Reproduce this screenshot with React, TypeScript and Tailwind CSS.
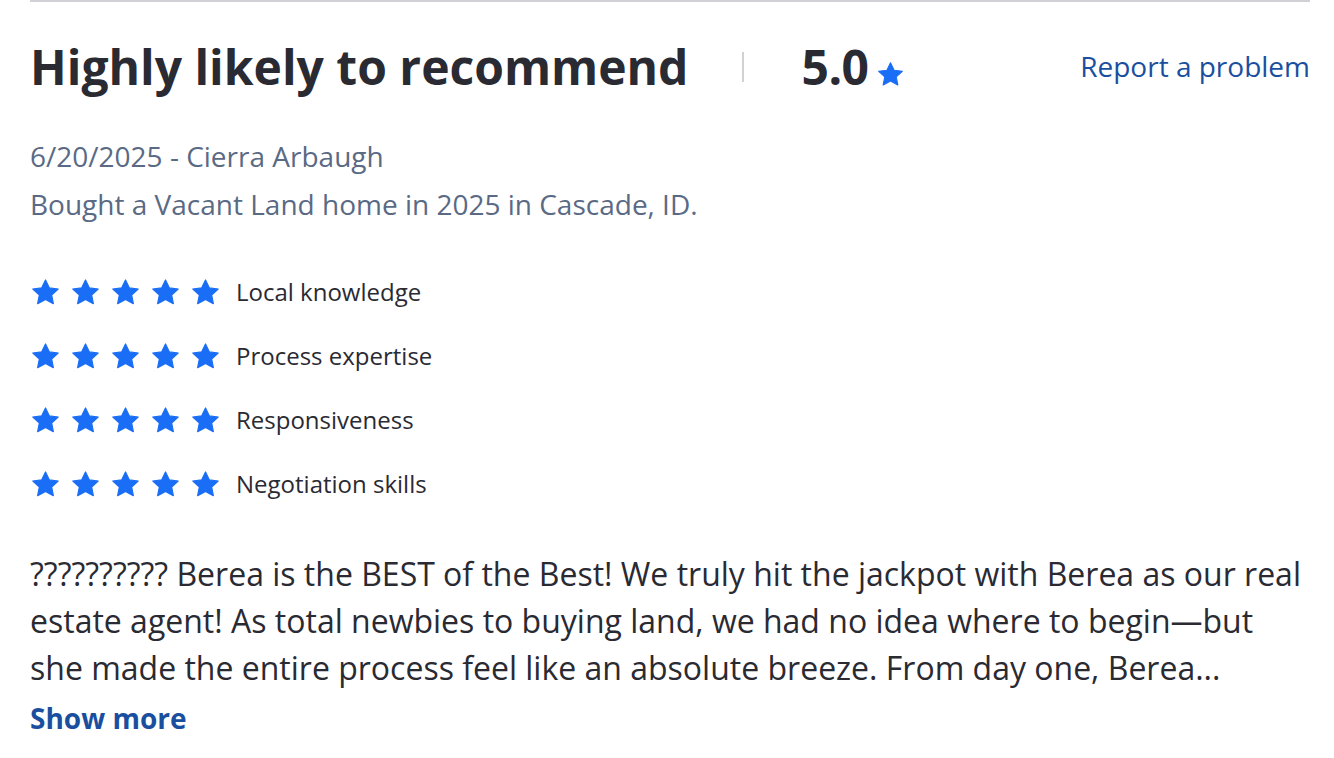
const categories = ['Local knowledge', 'Process expertise', 'Responsiveness', 'Negotiation skills']

function StarIcon({ className = '' }: { className?: string }) {
  return (
    <svg viewBox="0 0 24 24" className={className} fill="currentColor" stroke="currentColor" strokeWidth="1" strokeLinejoin="round">
      <path d="M12 1.6l3.2 6.6 7.3.9-5.4 5 1.4 7.2L12 17.7l-6.5 3.6 1.4-7.2-5.4-5 7.3-.9z" />
    </svg>
  )
}

export default function App() {
  return (
    <div className="min-h-screen bg-white font-['Open_Sans',sans-serif] text-[#2a2a33]">
      <div className="ml-[30px] mr-[24px] border-t-2 border-[#d1d1d5]">
        {/* Header */}
        <div className="flex items-center justify-between pt-[36px]">
          <div className="flex items-center">
            <h2 className="text-[48px] font-bold leading-[58px] text-[#2a2a33]">
              Highly likely to recommend
            </h2>
            <span className="ml-[54px] mr-[57px] h-[30px] w-[2px] bg-[#d1d1d5]" />
            <span className="text-[48px] font-bold leading-[58px] tracking-[-0.5px]">5.0</span>
            <StarIcon className="ml-[8px] mt-[14px] h-[27px] w-[27px] text-[#1a6ef5]" />
          </div>
          <a className="text-[28px] leading-[40px] text-[#1a4fa0] -mt-[2px]">Report a problem</a>
        </div>

        {/* Meta */}
        <div className="mt-[36px] text-[28px] leading-[48px] text-[#5a6a85]">
          <div>6/20/2025 - Cierra Arbaugh</div>
          <div>Bought a Vacant Land home in 2025 in Cascade, ID.</div>
        </div>

        {/* Ratings */}
        <div className="mt-[48px] flex flex-col gap-[32px]">
          {categories.map((c) => (
            <div key={c} className="flex items-center h-[32px]">
              <div className="flex gap-[11px] pl-[1px]">
                {[0, 1, 2, 3, 4].map((i) => (
                  <StarIcon key={i} className="h-[29px] w-[29px] text-[#1a6ef5]" />
                ))}
              </div>
              <span className="ml-[16px] text-[24px] text-[#2a2a33]">{c}</span>
            </div>
          ))}
        </div>

        {/* Body */}
        <p className="mt-[50px] text-[32px] leading-[47px] text-[#2a2a33]">
          ?????????? Berea is the BEST of the Best! We truly hit the jackpot with Berea as our real estate agent! As total newbies to buying land, we had no idea where to begin—but she made the entire process feel like an absolute breeze. From day one, Berea...
        </p>
        <button className="mt-[5px] text-[28px] font-bold leading-[44px] text-[#1a4fa0]">Show more</button>
      </div>
    </div>
  )
}
